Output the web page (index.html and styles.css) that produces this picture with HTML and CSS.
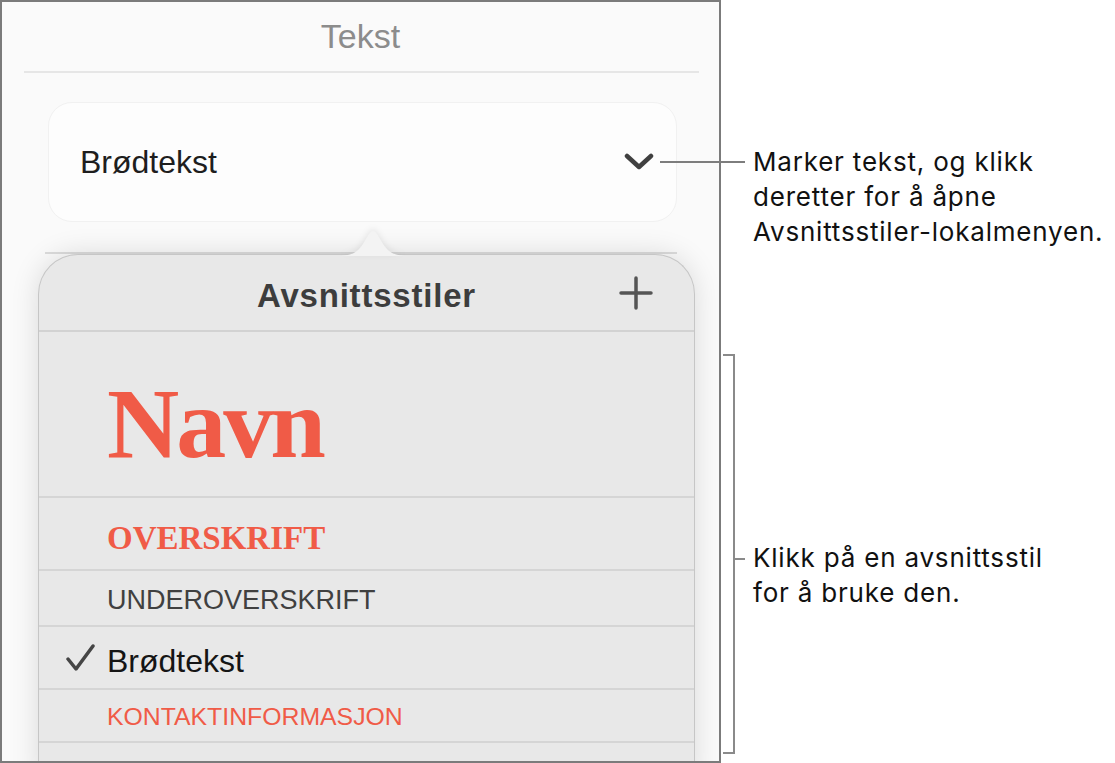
FILE: index.html
```html
<!DOCTYPE html>
<html lang="nb">
<head>
    <meta charset="UTF-8">
    <meta name="viewport" content="width=device-width, initial-scale=1.0">
    <title>Tekst – Avsnittsstiler</title>
    <link rel="stylesheet" href="styles.css">
</head>
<body>
    <div class="page">
        <div class="panel">
            <div class="panel-title">Tekst</div>
            <div class="rule"></div>

            <!-- current paragraph style, opens the menu -->
            <div class="style-field">
                <span class="field-value">Brødtekst</span>
                <svg class="chevron" width="30" height="18" viewBox="0 0 30 18" fill="none" stroke="currentColor" stroke-width="4.5" stroke-linecap="round" stroke-linejoin="round">
                    <polyline points="3 3 15 14 27 3"></polyline>
                </svg>
            </div>
            <div class="rule rule-field"></div>

            <div class="popover">
                <svg class="popover-arrow" width="72" height="28" viewBox="0 0 72 28">
                    <path d="M0 28 C14 28 20 25 26 16 L32 6 Q36 0 40 6 L46 16 C52 25 58 28 72 28 Z"></path>
                </svg>
                <div class="popover-head">
                    <span></span>
                    <span class="popover-title">Avsnittsstiler</span>
                    <svg class="plus" width="34" height="34" viewBox="0 0 34 34" stroke="currentColor" stroke-width="3.5" stroke-linecap="round">
                        <line x1="17" y1="2" x2="17" y2="32"></line>
                        <line x1="2" y1="17" x2="32" y2="17"></line>
                    </svg>
                </div>
                <ul class="style-list">
                    <li class="style-row row-name"><span class="mark"></span><span class="s-name">Navn</span></li>
                    <li class="style-row row-heading"><span class="mark"></span><span class="s-heading">OVERSKRIFT</span></li>
                    <li class="style-row row-sub"><span class="mark"></span><span class="s-sub">UNDEROVERSKRIFT</span></li>
                    <li class="style-row row-body">
                        <span class="mark">
                            <svg class="check" width="30" height="28" viewBox="0 0 30 28" fill="none" stroke="currentColor" stroke-width="3.5" stroke-linecap="round" stroke-linejoin="round">
                                <polyline points="2 15 10 25 27 2"></polyline>
                            </svg>
                        </span>
                        <span class="s-body">Brødtekst</span>
                    </li>
                    <li class="style-row row-contact"><span class="mark"></span><span class="s-contact">KONTAKTINFORMASJON</span></li>
                    <li class="style-row row-more"></li>
                </ul>
            </div>
        </div>

        <!-- annotations -->
        <div class="leader"></div>
        <p class="note note-field">Marker tekst, og klikk<br>deretter for å åpne<br>Avsnittsstiler-lokalmenyen.</p>

        <div class="bracket"></div>
        <p class="note note-list">Klikk på en avsnittsstil<br>for å bruke den.</p>
    </div>
</body>
</html>
```

FILE: styles.css
```css
/* General */
body {
    margin: 0;
    background: #fff;
    font-family: "Liberation Sans", Arial, sans-serif;
}

.page {
    position: relative;
    width: 1115px;
    height: 763px;
    overflow: hidden;
}

/* Inspector panel */
.panel {
    box-sizing: border-box;
    width: 721px;
    height: 763px;
    border: 2px solid #7b7b7b;
    background: #fafafa;
    overflow: hidden;
}

.panel-title {
    height: 69px;
    line-height: 69px;
    text-align: center;
    font-size: 34px;
    color: #8c8c8c;
}

.rule {
    height: 2px;
    margin: 0 20px 0 22px;
    background: #e6e6e6;
}

.rule-field {
    margin: 30px 42px 0 43px;
    background: #dcdcdc;
}

.style-field {
    box-sizing: border-box;
    height: 120px;
    margin: 29px 42px 0 46px;
    padding: 0 22px 0 31px;
    display: flex;
    justify-content: space-between;
    align-items: center;
    background: #fdfdfd;
    border: 1px solid #f1f1f1;
    border-radius: 24px;
}

.field-value {
    font-size: 32px;
    line-height: 1;
    color: #1e1e1e;
}

.chevron {
    color: #404040;
}

/* Paragraph style popover */
.popover {
    position: relative;
    margin: 0 24px 0 36px;
    background: #e8e8e8;
    border: 1px solid #c6c6c6;
    border-bottom: none;
    border-radius: 40px 40px 0 0;
    box-shadow: 0 0 28px rgba(0, 0, 0, 0.13);
}

.popover-arrow {
    position: absolute;
    left: 298px;
    top: -27px;
    fill: #f3f3f3;
    filter: drop-shadow(0 -2px 3px rgba(0, 0, 0, 0.08));
}

.popover-head {
    box-sizing: border-box;
    height: 77px;
    padding: 6px 41px 0;
    display: grid;
    grid-template-columns: 1fr auto 1fr;
    align-items: center;
    border-bottom: 2px solid #d2d2d2;
}

.popover-title {
    font-size: 33px;
    font-weight: bold;
    line-height: 1;
    letter-spacing: 0.8px;
    color: #3d3d3d;
}

.plus {
    justify-self: end;
    margin-top: -6px;
    color: #555;
}

.style-list {
    list-style: none;
    margin: 0;
    padding: 0;
}

.style-row {
    box-sizing: border-box;
    display: flex;
    align-items: center;
    border-bottom: 2px solid #d5d5d5;
}

.mark {
    box-sizing: border-box;
    flex: none;
    width: 68px;
    padding-left: 27px;
    display: flex;
    color: #454545;
}

.row-name { height: 166px; padding-top: 20px; }
.row-heading { height: 73px; padding-top: 9px; }
.row-sub { height: 56px; padding-top: 4px; }
.row-body { height: 63px; padding-top: 6px; }
.row-contact { height: 53px; padding-top: 4px; }
.row-more { height: 40px; border-bottom: none; }

.s-name {
    font-family: "Liberation Serif", "Times New Roman", serif;
    font-weight: bold;
    font-size: 100px;
    line-height: 1;
    letter-spacing: -3px;
    color: #f05b47;
}

.s-heading {
    font-family: "Liberation Serif", "Times New Roman", serif;
    font-weight: bold;
    font-size: 33px;
    line-height: 1;
    color: #f05b47;
}

.s-sub {
    font-size: 27px;
    line-height: 1;
    color: #404040;
}

.s-body {
    font-size: 32px;
    line-height: 1;
    color: #151515;
}

.s-contact {
    font-size: 24.8px;
    line-height: 1;
    color: #f05b47;
}

.check {
    margin-top: -6px;
}

/* Callouts */
.leader {
    position: absolute;
    left: 660px;
    top: 161px;
    width: 85px;
    height: 2px;
    background: #7d7d7d;
}

.bracket {
    position: absolute;
    left: 723px;
    top: 354px;
    width: 10px;
    height: 396px;
    border: 2px solid #8a8a8a;
    border-left: none;
}

.bracket::after {
    content: "";
    position: absolute;
    left: 12px;
    top: 202px;
    width: 10px;
    height: 2px;
    background: #8a8a8a;
}

.note {
    position: absolute;
    left: 753px;
    margin: 0;
    font-family: Inter, "Liberation Sans", sans-serif;
    font-size: 26px;
    line-height: 35px;
    letter-spacing: 0.8px;
    color: #111;
}

.note-field {
    top: 144px;
}

.note-list {
    top: 540px;
}
```
